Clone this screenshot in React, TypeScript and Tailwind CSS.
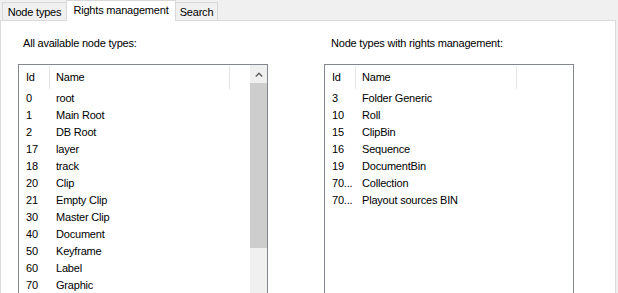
const allTypes: [string, string][] = [
  ['0', 'root'],
  ['1', 'Main Root'],
  ['2', 'DB Root'],
  ['17', 'layer'],
  ['18', 'track'],
  ['20', 'Clip'],
  ['21', 'Empty Clip'],
  ['30', 'Master Clip'],
  ['40', 'Document'],
  ['50', 'Keyframe'],
  ['60', 'Label'],
  ['70', 'Graphic'],
];

const managedTypes: [string, string][] = [
  ['3', 'Folder Generic'],
  ['10', 'Roll'],
  ['15', 'ClipBin'],
  ['16', 'Sequence'],
  ['19', 'DocumentBin'],
  ['70...', 'Collection'],
  ['70...', 'Playout sources BIN'],
];

function Header({ nameWidth }: { nameWidth: string }) {
  return (
    <div className="flex h-[25px] items-center">
      <div className="flex h-[23px] w-[31px] items-center border-r border-[#e5e5e5] pl-[7px]">Id</div>
      <div className={`flex h-[23px] items-center border-r border-[#e5e5e5] pl-[6px] ${nameWidth}`}>Name</div>
    </div>
  );
}

function Rows({ rows }: { rows: [string, string][] }) {
  return (
    <div>
      {rows.map(([id, name], i) => (
        <div key={i} className="flex h-[17px] items-center">
          <div className="w-[31px] pl-[7px]">{id}</div>
          <div className="pl-[6px]">{name}</div>
        </div>
      ))}
    </div>
  );
}

function Tab({ label, active, className }: { label: string; active?: boolean; className: string }) {
  return (
    <div
      className={
        active
          ? `relative z-10 -mb-px flex h-[21px] justify-center border border-b-0 border-[#d9d9d9] bg-white pt-[3px] ${className}`
          : `flex h-[18px] justify-center border-t border-[#d9d9d9] bg-[#f0f0f0] pt-[3px] ${className}`
      }
    >
      {label}
    </div>
  );
}

export default function App() {
  return (
    <div
      className="h-[293px] w-[618px] overflow-hidden bg-[#f0f0f0] text-[11px] leading-[13px] tracking-[-0.2px] text-black"
      style={{ fontFamily: '"Liberation Sans", Arial, sans-serif' }}
    >
      <div className="flex h-[20px] items-end pl-[2px]">
        <Tab label="Node types" className="w-[64px] border-l" />
        <Tab label="Rights management" active className="w-[110px]" />
        <Tab label="Search" className="w-[42px] border-r" />
      </div>
      <div className="h-[280px] w-[616px] border border-[#d9d9d9] bg-white">
        <div className="flex gap-[56px] pl-[17px]">
          <div className="w-[250px]">
            <div className="pl-[5px] pt-[15px] leading-[14px]">All available node types:</div>
            <div className="mt-[14px] flex h-[240px] border border-[#828790]">
              <div className="flex-1">
                <Header nameWidth="w-[180px]" />
                <Rows rows={allTypes} />
              </div>
              <div className="flex w-[17px] flex-col bg-[#f0f0f0]">
                <div className="flex h-[18px] items-center justify-center">
                  <svg width="8" height="5" viewBox="0 0 8 5">
                    <path d="M0.8 4.4 L4 1.2 L7.2 4.4" fill="none" stroke="#606060" strokeWidth="1.4" />
                  </svg>
                </div>
                <div className="h-[165px] bg-[#cdcdcd]" />
              </div>
            </div>
          </div>
          <div className="w-[250px]">
            <div className="pl-[7px] pt-[15px] leading-[14px]">Node types with rights management:</div>
            <div className="mt-[14px] h-[240px] border border-[#828790]">
              <Header nameWidth="w-[161px]" />
              <Rows rows={managedTypes} />
            </div>
          </div>
        </div>
      </div>
    </div>
  );
}
